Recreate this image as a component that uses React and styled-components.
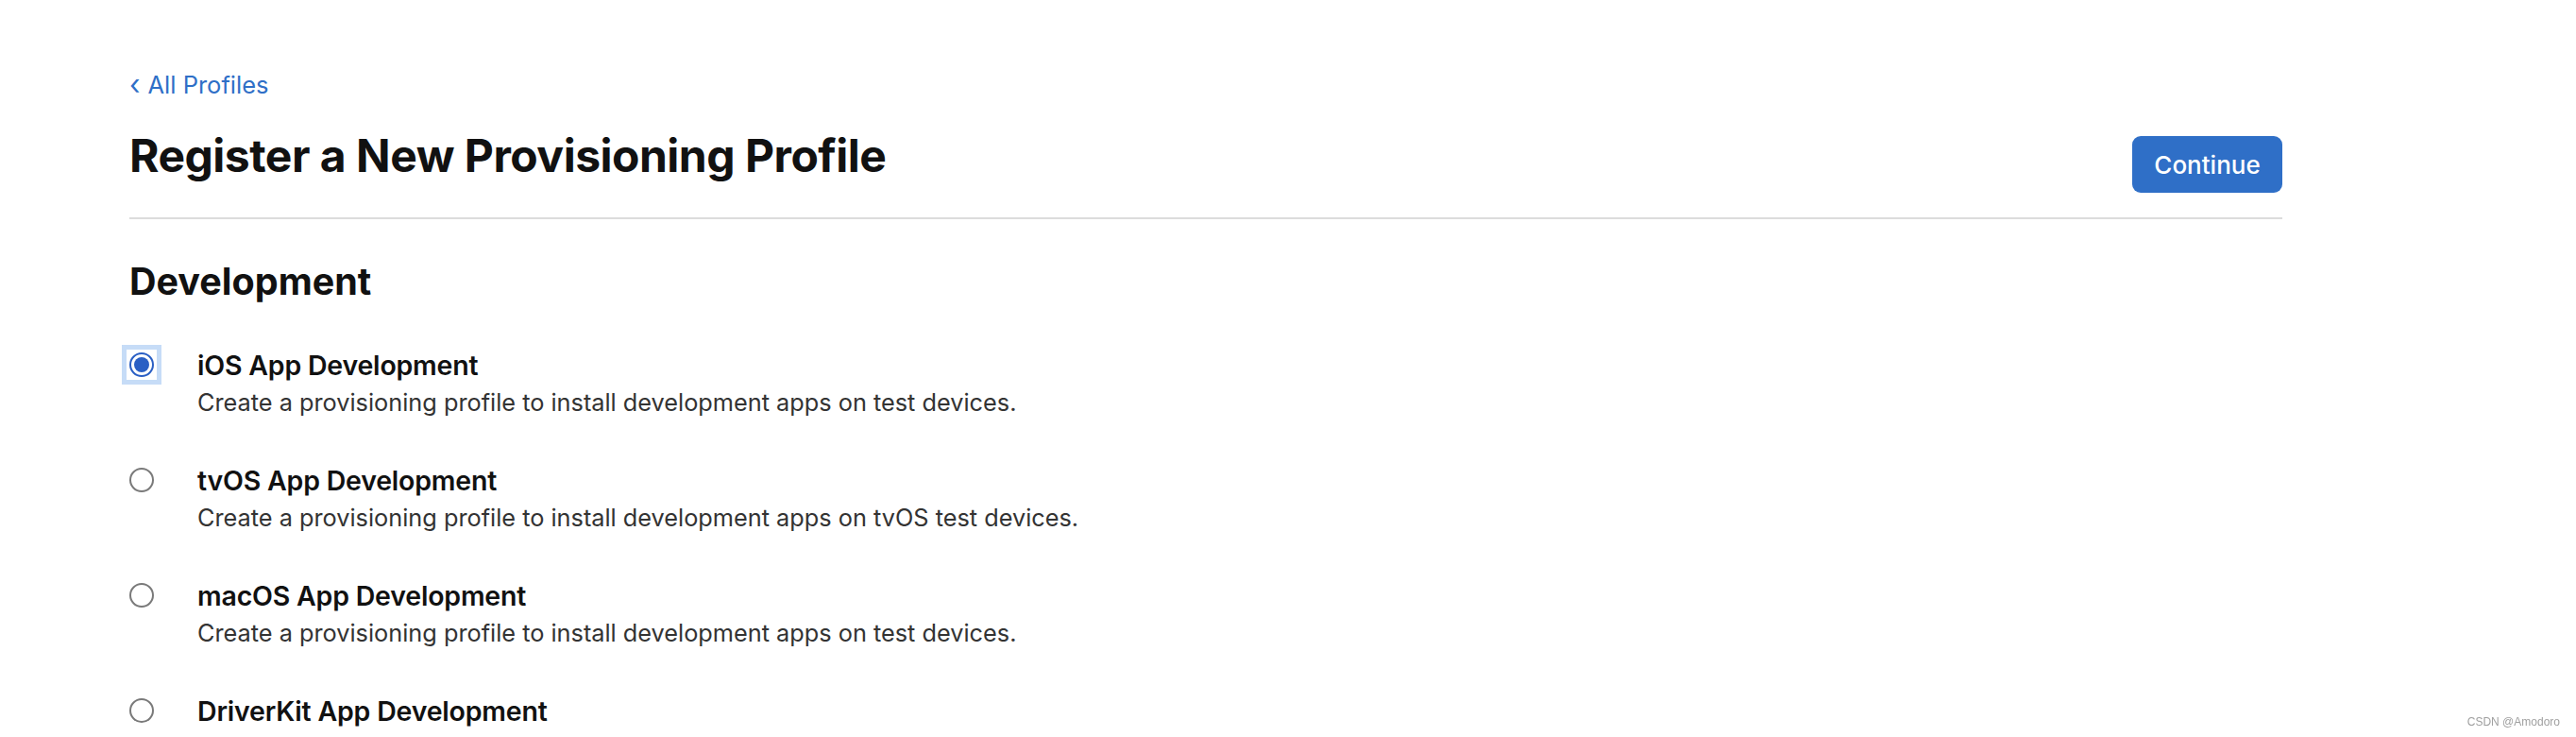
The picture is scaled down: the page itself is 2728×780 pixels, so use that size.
import React, { useState } from 'react';
import styled, { createGlobalStyle } from 'styled-components';

const GlobalStyle = createGlobalStyle`
  html, body {
    margin: 0;
    padding: 0;
    background: #fff;
    overflow: hidden;
  }
  body {
    font-family: Inter, "Noto Sans", sans-serif;
    color: #1d1d1f;
  }
`;

// Layout
const Page = styled.main`
  width: 2280px;
  padding: 74px 0 0 137px;
`;

const BackLink = styled.a`
  display: inline-flex;
  align-items: center;
  gap: 8px;
  font-size: 25.5px;
  line-height: 32px;
  color: #2f6fc7;
  text-decoration: none;
  cursor: pointer;
`;

const Chevron = styled.span`
  font-size: 30px;
  line-height: 32px;
  margin-top: -2px;
`;

const HeaderRow = styled.div`
  display: flex;
  justify-content: space-between;
  align-items: flex-start;
  margin-top: 30px;
`;

const Title = styled.h1`
  margin: 0;
  font-size: 48px;
  line-height: 58px;
  font-weight: 700;
  letter-spacing: -0.5px;
  color: #111;
`;

const ContinueBtn = styled.button`
  margin-top: 8px;
  width: 159px;
  height: 60px;
  border: none;
  border-radius: 9px;
  background: #2f6fc7;
  color: #fff;
  font-family: Inter, sans-serif;
  font-size: 26px;
  font-weight: 500;
  cursor: pointer;
`;

const Divider = styled.hr`
  margin: 26px 0 0;
  border: none;
  height: 2px;
  background: #dcdcdc;
`;

const SectionTitle = styled.h2`
  margin: 42px 0 0;
  font-size: 39.5px;
  line-height: 48px;
  font-weight: 700;
  color: #111;
`;

const OptionList = styled.div`
  display: flex;
  flex-direction: column;
  gap: 50px;
  margin-top: 48px;
`;

const Option = styled.label`
  display: flex;
  align-items: flex-start;
  gap: 46px;
  cursor: pointer;
`;

const RadioWrap = styled.span`
  flex: none;
  width: 32px;
  height: 32px;
  margin: 0 -3px 0;
  display: flex;
  align-items: center;
  justify-content: center;
  background: #fff;
  outline: ${(p) => (p.$focused ? '5px solid #c6dcf7' : 'none')};
`;

const Radio = styled.span`
  box-sizing: border-box;
  width: 26px;
  height: 26px;
  border-radius: 50%;
  border: 2px solid ${(p) => (p.$checked ? '#2a5fc4' : '#7a7a7a')};
  display: flex;
  align-items: center;
  justify-content: center;

  &::after {
    content: '';
    display: ${(p) => (p.$checked ? 'block' : 'none')};
    width: 16px;
    height: 16px;
    border-radius: 50%;
    background: #2a5fc4;
  }
`;

const OptionText = styled.div`
  display: flex;
  flex-direction: column;
`;

const OptionTitle = styled.span`
  font-size: 28.5px;
  line-height: 34px;
  font-weight: 600;
  letter-spacing: -0.2px;
  color: #111;
`;

const OptionDesc = styled.span`
  margin-top: 6px;
  font-size: 25.3px;
  line-height: 32px;
  color: #333;
`;

const Watermark = styled.div`
  position: fixed;
  right: 17px;
  bottom: 9px;
  font-family: "Liberation Sans", Arial, sans-serif;
  font-size: 12px;
  color: #a0a0a0;
`;

const options = [
  {
    id: 'ios',
    title: 'iOS App Development',
    desc: 'Create a provisioning profile to install development apps on test devices.',
  },
  {
    id: 'tvos',
    title: 'tvOS App Development',
    desc: 'Create a provisioning profile to install development apps on tvOS test devices.',
  },
  {
    id: 'macos',
    title: 'macOS App Development',
    desc: 'Create a provisioning profile to install development apps on test devices.',
  },
  {
    id: 'driverkit',
    title: 'DriverKit App Development',
    desc: '',
  },
];

const App = () => {
  const [selected, setSelected] = useState('ios');

  return (
    <>
      <GlobalStyle />
      <Page>
        <BackLink>
          <Chevron>‹</Chevron>
          All Profiles
        </BackLink>

        <HeaderRow>
          <Title>Register a New Provisioning Profile</Title>
          <ContinueBtn type="button">Continue</ContinueBtn>
        </HeaderRow>
        <Divider />

        <SectionTitle>Development</SectionTitle>
        <OptionList>
          {options.map((opt) => (
            <Option key={opt.id} onClick={() => setSelected(opt.id)}>
              <RadioWrap $focused={selected === opt.id}>
                <Radio $checked={selected === opt.id} />
              </RadioWrap>
              <OptionText>
                <OptionTitle>{opt.title}</OptionTitle>
                {opt.desc && <OptionDesc>{opt.desc}</OptionDesc>}
              </OptionText>
            </Option>
          ))}
        </OptionList>
      </Page>
      <Watermark>CSDN @Amodoro</Watermark>
    </>
  );
};

export default App;
